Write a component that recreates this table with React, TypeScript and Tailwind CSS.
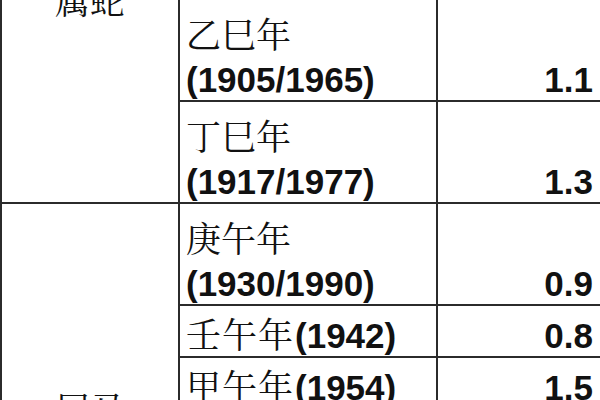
const cjk = "font-['Noto_Serif_CJK_SC','Noto_Sans_CJK_SC',serif]"
const num = "font-['Liberation_Sans',Arial,sans-serif] font-bold"

type Row = { gz: string; years: string; value: string; wrap: boolean }

const groups: { name: string; rows: Row[] }[] = [
  {
    name: "属蛇",
    rows: [
      { gz: "辛巳年", years: "(1941/2001)", value: "0.6", wrap: true },
      { gz: "癸巳年", years: "(1953/2013)", value: "0.7", wrap: true },
      { gz: "乙巳年", years: "(1905/1965)", value: "1.1", wrap: true },
      { gz: "丁巳年", years: "(1917/1977)", value: "1.3", wrap: true },
    ],
  },
  {
    name: "属马",
    rows: [
      { gz: "庚午年", years: "(1930/1990)", value: "0.9", wrap: true },
      { gz: "壬午年", years: "(1942)", value: "0.8", wrap: false },
      { gz: "甲午年", years: "(1954)", value: "1.5", wrap: false },
      { gz: "丙午年", years: "(1906/1966)", value: "1.3", wrap: true },
      { gz: "戊午年", years: "(1918/1978)", value: "1.9", wrap: true },
    ],
  },
]

const cell = "border-2 border-[#2b2b2b] p-0"

const App = () => {
  return (
    <div className="w-[600px] h-[400px] overflow-hidden bg-white text-[#111]">
      <table className="w-[600px] table-fixed border-collapse -mt-[206px] text-[35px]">
        <colgroup>
          <col className="w-[178px]" />
          <col className="w-[258px]" />
          <col className="w-[164px]" />
        </colgroup>
        <tbody>
          {groups.map(group =>
            group.rows.map((row, i) => (
              <tr key={group.name + row.gz} className={row.wrap ? "h-[102px]" : "h-[52px]"}>
                {i === 0 && (
                  <td rowSpan={group.rows.length} className={`${cell} align-middle text-center ${cjk}`}>
                    {group.name}
                  </td>
                )}
                <td className={`${cell} align-bottom pl-[6px]`}>
                  {row.wrap ? (
                    <>
                      <div className={`${cjk} leading-[54px]`}>{row.gz}</div>
                      <div className={`${num} leading-[40px]`}>{row.years}</div>
                    </>
                  ) : (
                    <div className="leading-[40px] whitespace-nowrap">
                      <span className={`${cjk} tracking-[1px]`}>{row.gz}</span>
                      <span className={`${num} ml-[1px]`}>{row.years}</span>
                    </div>
                  )}
                </td>
                <td className={`${cell} align-bottom text-right pr-[7px] ${num} leading-[40px]`}>
                  {row.value}
                </td>
              </tr>
            ))
          )}
        </tbody>
      </table>
    </div>
  )
}

export default App
